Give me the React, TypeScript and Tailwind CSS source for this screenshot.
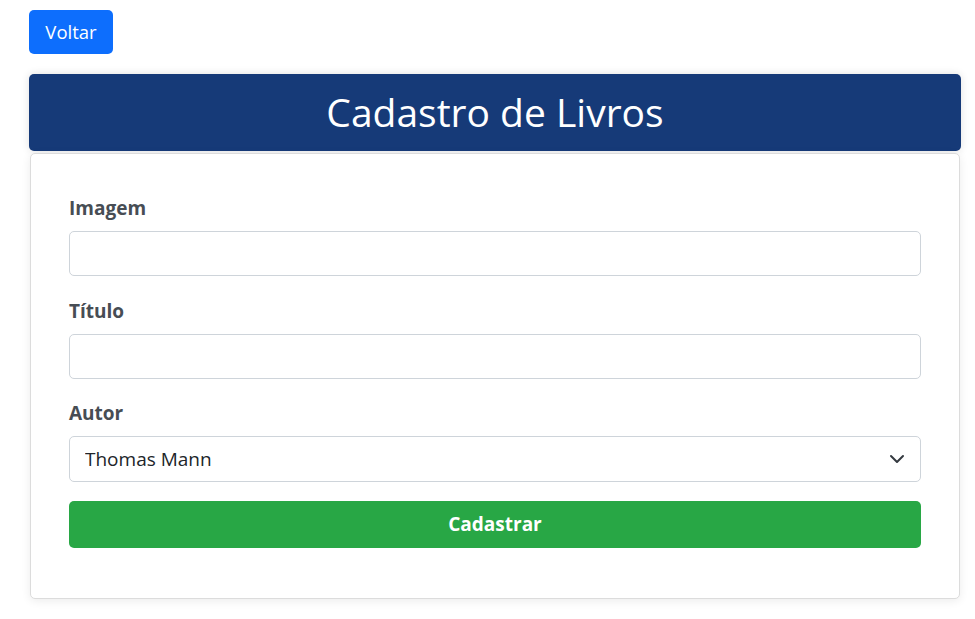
import React from "react";

const autores = ["Thomas Mann", "Franz Kafka", "Hermann Hesse"];

export default function App() {
  const [imagem, setImagem] = React.useState("");
  const [titulo, setTitulo] = React.useState("");
  const [autor, setAutor] = React.useState(autores[0]);

  return (
    <div className="min-h-screen bg-white pt-[10px] pr-[14px] pl-[29px] font-['Open_Sans',sans-serif]">
      <button className="h-[44px] w-[84px] rounded-[5px] bg-[#0d6efd] text-[18.5px] text-white">
        Voltar
      </button>

      <div className="mt-[20px]">
        {/* cabeçalho */}
        <div className="flex h-[77px] items-center justify-center rounded-[5px] bg-[#163a78] shadow-[0_0_8px_rgba(0,0,0,0.12)]">
          <h1 className="text-[39px] text-white">Cadastro de Livros</h1>
        </div>

        <form
          onSubmit={(e) => e.preventDefault()}
          className="mx-px mt-[2px] flex flex-col rounded-[5px] border border-[#dcdcdc] bg-white px-[38px] pt-[40px] pb-[50px] shadow-[0_2px_10px_rgba(0,0,0,0.08)]"
        >
          <label className="mb-[9px] text-[19px] leading-[28px] font-bold text-[#474d54]">Imagem</label>
          <input
            value={imagem}
            onChange={(e) => setImagem(e.target.value)}
            className="h-[45px] rounded-[5px] border border-[#ced4da] px-[15px] text-[19px]"
          />

          <label className="mt-[21px] mb-[9px] text-[19px] leading-[28px] font-bold text-[#474d54]">Título</label>
          <input
            value={titulo}
            onChange={(e) => setTitulo(e.target.value)}
            className="h-[45px] rounded-[5px] border border-[#ced4da] px-[15px] text-[19px]"
          />

          <label className="mt-[20px] mb-[9px] text-[19px] leading-[28px] font-bold text-[#474d54]">Autor</label>
          <div className="relative">
            <select
              value={autor}
              onChange={(e) => setAutor(e.target.value)}
              className="h-[46px] w-full appearance-none rounded-[5px] border border-[#ced4da] bg-white px-[15px] text-[19px] text-[#212529]"
            >
              {autores.map((a) => (
                <option key={a} value={a}>
                  {a}
                </option>
              ))}
            </select>
            <svg
              className="pointer-events-none absolute top-[15px] right-[16px]"
              width="16"
              height="16"
              viewBox="0 0 16 16"
            >
              <path d="M2 5l6 6 6-6" fill="none" stroke="#343a40" strokeWidth="2" strokeLinecap="round" strokeLinejoin="round" />
            </svg>
          </div>

          <button
            type="submit"
            className="mt-[19px] h-[47px] rounded-[5px] bg-[#28a745] text-[19px] font-bold text-white"
          >
            Cadastrar
          </button>
        </form>
      </div>
    </div>
  );
}
